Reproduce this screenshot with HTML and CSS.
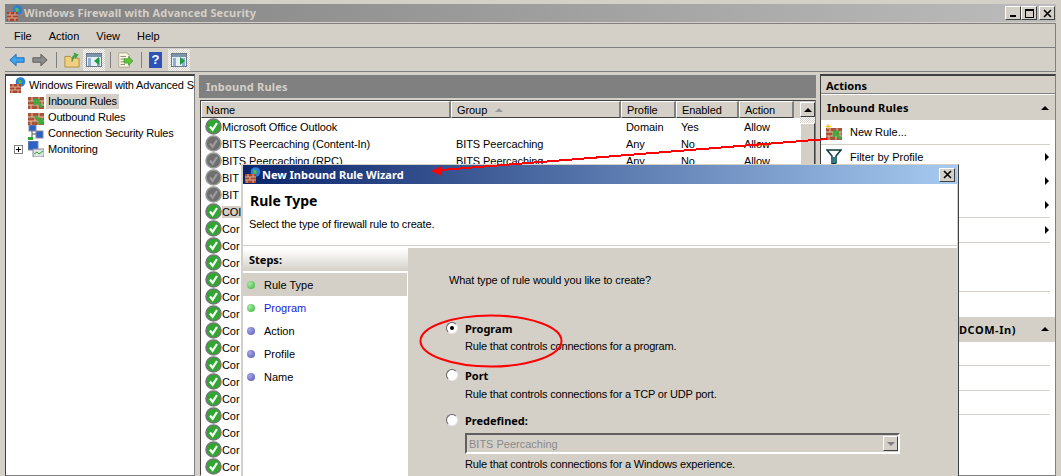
FILE: index.html
```html
<!DOCTYPE html>
<html lang="en">
<head>
<meta charset="utf-8">
<title>Windows Firewall with Advanced Security</title>
<link rel="stylesheet" href="styles.css">
</head>
<body>
<svg class="defs" width="0" height="0">
  <defs>
    <symbol id="ok" viewBox="0 0 17 17">
      <circle cx="8.5" cy="8.5" r="7.5" fill="#2fa82f" stroke="#777" stroke-width="1.6"/>
      <path d="M5 8.5l2.6 3.3L12 5" fill="none" stroke="#fff" stroke-width="2.2"/>
    </symbol>
    <symbol id="off" viewBox="0 0 17 17">
      <circle cx="8.5" cy="8.5" r="7.5" fill="#6f6f6f" stroke="#999" stroke-width="1.6"/>
      <path d="M5 8.5l2.6 3.3L12 5" fill="none" stroke="#9c9c9c" stroke-width="2.2"/>
    </symbol>
    <symbol id="brick" viewBox="0 0 16 16">
      <rect x="0" y="4" width="16" height="12" fill="#a9543a"/>
      <path d="M0 8h16M0 12h16M4 4v4M11 4v4M7 8v4M14 8v4M3 12v4M10 12v4" stroke="#e3c4a8" stroke-width="1" fill="none"/>
    </symbol>
    <symbol id="globewall" viewBox="0 0 16 16">
      <circle cx="10.5" cy="5" r="4.8" fill="#2a7fd6"/>
      <path d="M8 2.5l3 .5 1 3-3 1.5z" fill="#58b848"/>
      <rect x="0" y="7" width="11" height="9" fill="#a9432c"/>
      <path d="M0 10h11M0 13h11M3 7v3M8 7v3M5 10v3M2 13v3M8 13v3" stroke="#dcae96" stroke-width="1" fill="none"/>
    </symbol>
    <symbol id="dlg" viewBox="0 0 22 22">
      <rect x="3.500" y="4.500" width="15" height="13" fill="#e8eef5" stroke="#6b7a8a"/>
      <rect x="4" y="5" width="14" height="3" fill="#7d94ad"/>
      <rect x="5" y="9" width="3" height="8" fill="#8fb0cf"/>
      <rect x="14" y="9" width="3" height="8" fill="#8fb0cf"/>
    </symbol>
  </defs>
</svg>

<div class="window">
  <header class="titlebar">
    <svg class="ico16"><use href="#globewall"/></svg>
    <span class="title-text">Windows Firewall with Advanced Security</span>
    <div class="winbtns">
      <span class="winbtn"><i class="min"></i></span>
      <span class="winbtn"><i class="max"></i></span>
      <span class="winbtn close"><svg width="11" height="11" viewBox="0 0 11 11"><path d="M2 2l7 7M9 2l-7 7" stroke="#000" stroke-width="1.6"/></svg></span>
    </div>
  </header>

  <nav class="menubar">
    <span>File</span><span>Action</span><span>View</span><span>Help</span>
  </nav>

  <div class="toolbar">
    <svg class="tool back" viewBox="0 0 18 18"><path d="M1 9l7-6.500v4h9v5H8v4z" fill="#3fa4ea" stroke="#1766b8"/></svg>
    <svg class="tool fwd" viewBox="0 0 18 18"><path d="M17 9l-7-6.500v4H1v5h9v4z" fill="#8c8c8c" stroke="#555"/></svg>
    <span class="tsep first"></span>
    <svg class="tool folder" viewBox="0 0 18 18"><path d="M1 5h6l2 2h8v10H1z" fill="#f0d080" stroke="#a98d3a"/><path d="M9 11c-1-4 1-7 3-8l-1-2 5 2-3 4-1-2c-1 1-2 3-3 6z" fill="#3cae3c" stroke="#24802a" stroke-width=".5"/></svg>
    <span class="tbtn"><svg class="ico22"><use href="#dlg"/></svg><svg class="arrow-in" viewBox="0 0 6 8"><path d="M5 0v8L0 4z" fill="#1c9c40"/></svg></span>
    <span class="tsep"></span>
    <svg class="tool export" viewBox="0 0 18 18"><path d="M2 1h9l3 3v13H2z" fill="#fbf6e0" stroke="#a8a48c"/><path d="M4 5h6M4 8h5M4 11h5M4 14h5" stroke="#7b7b7b"/><path d="M8 7.500h5V5l5 5-5 5v-2.500H8z" fill="#5fc23a" stroke="#2f9021" stroke-width=".7"/></svg>
    <span class="tsep"></span>
    <span class="helpbtn">?</span>
    <span class="tbtn"><svg class="ico22"><use href="#dlg"/></svg><svg class="arrow-in" viewBox="0 0 6 8"><path d="M1 0v8l5-4z" fill="#1c9c40"/></svg></span>
  </div>

  <main class="panes">
    <aside class="tree">
      <div class="node root"><svg class="ico16"><use href="#globewall"/></svg><span>Windows Firewall with Advanced S</span></div>
      <div class="node"><svg class="ico16"><use href="#brick"/><path d="M14 14L7 7m0 5V7h5" stroke="#3cae3c" stroke-width="2.500" fill="none"/></svg><span class="sel">Inbound Rules</span></div>
      <div class="node"><svg class="ico16"><use href="#brick"/><path d="M7 7l7 7m0-5v5H9" stroke="#3cae3c" stroke-width="2.500" fill="none"/></svg><span>Outbound Rules</span></div>
      <div class="node"><svg class="ico16" viewBox="0 0 16 16"><rect x="1" y="0" width="7" height="6" fill="#2a62c8" stroke="#889"/><rect x="8" y="6" width="7" height="7" fill="#2a62c8" stroke="#889"/><rect x="0" y="12" width="5" height="3" fill="#2ea52e"/><path d="M4 6v6M8 9H4" stroke="#555"/></svg><span>Connection Security Rules</span></div>
      <div class="node"><b class="plus"></b><svg class="ico16" viewBox="0 0 16 16"><rect x="0" y="0" width="10" height="9" fill="#2a62c8" stroke="#889"/><rect x="5" y="8" width="11" height="8" fill="#dfe3e6" stroke="#889"/><path d="M6 13l3-2 2 2 4-3" stroke="#2ea52e" fill="none"/></svg><span>Monitoring</span></div>
    </aside>

    <section class="center">
      <h2 class="center-head">Inbound Rules</h2>
      <div class="list">
        <div class="list-body">
          <div class="row head">
            <span class="c name">Name</span>
            <span class="c group">Group <i class="sort"></i></span>
            <span class="c profile">Profile</span>
            <span class="c enabled">Enabled</span>
            <span class="c action">Action</span>
          </div>
          <div class="row"><svg class="ok"><use href="#ok"/></svg><span class="c name">Microsoft Office Outlook</span><span class="c group"></span><span class="c profile">Domain</span><span class="c enabled">Yes</span><span class="c action">Allow</span></div>
          <div class="row"><svg class="ok"><use href="#off"/></svg><span class="c name">BITS Peercaching (Content-In)</span><span class="c group">BITS Peercaching</span><span class="c profile">Any</span><span class="c enabled">No</span><span class="c action">Allow</span></div>
          <div class="row"><svg class="ok"><use href="#off"/></svg><span class="c name">BITS Peercaching (RPC)</span><span class="c group">BITS Peercaching</span><span class="c profile">Any</span><span class="c enabled">No</span><span class="c action">Allow</span></div>
          <div class="row"><svg class="ok"><use href="#off"/></svg><span class="c name">BIT</span></div>
          <div class="row"><svg class="ok"><use href="#off"/></svg><span class="c name">BIT</span></div>
          <div class="row"><svg class="ok"><use href="#ok"/></svg><span class="c name"><span class="sel">COI</span></span></div>
          <div class="row"><svg class="ok"><use href="#ok"/></svg><span class="c name">Cor</span></div>
          <div class="row"><svg class="ok"><use href="#ok"/></svg><span class="c name">Cor</span></div>
          <div class="row"><svg class="ok"><use href="#ok"/></svg><span class="c name">Cor</span></div>
          <div class="row"><svg class="ok"><use href="#ok"/></svg><span class="c name">Cor</span></div>
          <div class="row"><svg class="ok"><use href="#ok"/></svg><span class="c name">Cor</span></div>
          <div class="row"><svg class="ok"><use href="#ok"/></svg><span class="c name">Cor</span></div>
          <div class="row"><svg class="ok"><use href="#ok"/></svg><span class="c name">Cor</span></div>
          <div class="row"><svg class="ok"><use href="#ok"/></svg><span class="c name">Cor</span></div>
          <div class="row"><svg class="ok"><use href="#ok"/></svg><span class="c name">Cor</span></div>
          <div class="row"><svg class="ok"><use href="#ok"/></svg><span class="c name">Cor</span></div>
          <div class="row"><svg class="ok"><use href="#ok"/></svg><span class="c name">Cor</span></div>
          <div class="row"><svg class="ok"><use href="#ok"/></svg><span class="c name">Cor</span></div>
          <div class="row"><svg class="ok"><use href="#ok"/></svg><span class="c name">Cor</span></div>
          <div class="row"><svg class="ok"><use href="#ok"/></svg><span class="c name">Cor</span></div>
          <div class="row"><svg class="ok"><use href="#ok"/></svg><span class="c name">Cor</span></div>
        </div>
        <div class="scroll">
          <span class="sbtn"><i class="up"></i></span>
          <span class="track"></span>
          <span class="thumb"></span>
        </div>
      </div>
    </section>

    <aside class="actions">
      <h3 class="actions-head">Actions</h3>
      <h4 class="group-head">Inbound Rules <i class="up"></i></h4>
      <div class="act line"><svg class="ico16" viewBox="0 0 16 16"><use href="#brick"/><path d="M15 15L8 8m0 5V8h5" stroke="#3cae3c" stroke-width="2.500" fill="none"/><path d="M2 0v5M0 2.500h5" stroke="#f2c230" stroke-width="1.300"/></svg><span>New Rule...</span></div>
      <div class="act"><svg class="ico16" viewBox="0 0 16 16"><path d="M1 1h14l-5 6v7l-4 1V7z" fill="#fff" stroke="#0d3b40" stroke-width="1.500"/><path d="M7 8h2v6H7z" fill="#168c96"/></svg><span>Filter by Profile</span><i class="more"></i></div>
      <div class="act"><i class="more"></i></div>
      <div class="act line"><i class="more"></i></div>
      <div class="act line"><i class="more"></i></div>
      <div class="act"></div>
      <div class="act line"></div>
      <div class="act plain"></div>
      <h4 class="group-head second"><span class="clip-label">(DCOM-In)</span> <i class="up"></i></h4>
      <div class="act line"></div>
      <div class="act line"></div>
      <div class="act line"></div>
    </aside>
  </main>
</div>

<div class="dialog">
  <div class="dlg-title">
    <svg class="ico16"><use href="#globewall"/></svg>
    <span>New Inbound Rule Wizard</span>
    <span class="winbtn close"><svg width="11" height="11" viewBox="0 0 11 11"><path d="M2 2l7 7M9 2l-7 7" stroke="#000" stroke-width="1.6"/></svg></span>
  </div>
  <div class="dlg-head">
    <h1>Rule Type</h1>
    <p>Select the type of firewall rule to create.</p>
  </div>
  <div class="dlg-body">
    <div class="steps">
      <div class="steps-head">Steps:</div>
      <div class="step on"><i class="dot green"></i>Rule Type</div>
      <div class="step link"><i class="dot green"></i>Program</div>
      <div class="step"><i class="dot"></i>Action</div>
      <div class="step"><i class="dot"></i>Profile</div>
      <div class="step"><i class="dot"></i>Name</div>
    </div>
    <div class="form">
      <p class="question">What type of rule would you like to create?</p>
      <div class="opt prog"><i class="radio checked"></i><div><b>Program</b><p>Rule that controls connections for a program.</p></div></div>
      <div class="opt port"><i class="radio"></i><div><b>Port</b><p>Rule that controls connections for a TCP or UDP port.</p></div></div>
      <div class="opt pre"><i class="radio"></i><div class="pre-col"><b>Predefined:</b>
        <div class="combo"><span>BITS Peercaching</span><span class="combo-btn"><i></i></span></div>
        <p>Rule that controls connections for a Windows experience.</p></div></div>
    </div>
  </div>
</div>

<svg class="annot" width="1061" height="476" viewBox="0 0 1061 476">
  <path d="M827 139L441 170" fill="none" stroke="#f00" stroke-width="2" shape-rendering="crispEdges"/>
  <path d="M431 171l11-5v10z" fill="#f00"/>
  <ellipse cx="491" cy="341" rx="70.500" ry="25.500" fill="none" stroke="#f00" stroke-width="2"/>
</svg>
</body>
</html>
```
FILE: styles.css
```css
html, body {
  margin: 0;
  height: 476px;
  overflow: hidden;
}
body {
  position: relative;
  background: #d4d0c8;
  font: 11px "Liberation Sans", "Noto Sans", sans-serif;
  color: #000;
}
h1, h2, h3, h4, b { font-family: "Noto Sans", "Liberation Sans", sans-serif; }
h1, h2, h3, h4, p { margin: 0; }
i { display: block; }
svg { flex: none; display: block; }
.defs { position: absolute; }
.ico16 { width: 16px; height: 16px; }
.ico22 { width: 22px; height: 22px; }

.window {
  height: 476px;
  box-sizing: border-box;
  padding: 4px 5px 0 5px;
  display: flex;
  flex-direction: column;
}
.titlebar {
  height: 18px;
  display: flex;
  align-items: center;
  gap: 1px;
  padding-left: 2px;
  background: linear-gradient(90deg, #808080, #bcbcbc);
  color: #d4d0c8;
  font-family: "Noto Sans", "Liberation Sans", sans-serif;
  font-weight: 700;
  font-size: 11px;
  letter-spacing: .13px;
}
.title-text { margin-top: -1px; }
.winbtns { margin-left: auto; display: flex; margin-right: 1px; }
.winbtn {
  width: 16px;
  height: 14px;
  box-sizing: border-box;
  background: #d4d0c8;
  border: 1px solid;
  border-color: #fff #404040 #404040 #fff;
  display: flex;
  align-items: center;
  justify-content: center;
}
.winbtns .close { margin-left: 2px; }
.min { width: 6px; height: 2px; background: #000; margin-top: 6px; }
.max { width: 9px; height: 9px; box-sizing: border-box; border: 1px solid #000; border-top-width: 2px; }

.menubar {
  margin-top: 1px;
  height: 25px;
  display: flex;
  align-items: center;
  gap: 17px;
  padding-left: 9px;
  border: 1px solid #808080;
  border-width: 1px 1px 1px 0;
  box-sizing: border-box;
}
.toolbar {
  height: 24px;
  display: flex;
  align-items: center;
  padding-left: 4px;
  border-bottom: 1px solid #808080;
  border-right: 1px solid #808080;
  box-sizing: border-box;
}
.tool { width: 16px; height: 16px; margin-right: 8px; }
.tool.back { margin-right: 7px; }
.tool.folder { margin-right: 3px; }
.tsep { width: 1px; height: 16px; background: #808080; margin-right: 6px; }
.tsep.first { margin-right: 7px; }
.tool.export + .tsep { margin-right: 7px; }
.tbtn {
  width: 22px;
  height: 22px;
  position: relative;
  margin-right: 5px;
  background: repeating-conic-gradient(#d4d0c8 0 25%, #fff 0 50%) 0 0 / 2px 2px;
}
.arrow-in { position: absolute; left: 11px; top: 8px; width: 6px; height: 8px; }
.helpbtn {
  width: 13px;
  height: 16px;
  background: #2d53b8;
  color: #fff;
  font-weight: 700;
  font-size: 13px;
  line-height: 16px;
  text-align: center;
  margin-right: 6px;
}

.panes {
  flex: 1;
  min-height: 0;
  margin-top: 2px;
  display: flex;
}
.tree {
  width: 190px;
  box-sizing: border-box;
  flex: none;
  background: #fff;
  border: 1px solid #808080;
  border-top: 2px solid #404040;
  border-left: 1px solid #404040;
  padding-top: 1px;
  overflow: hidden;
  white-space: nowrap;
  letter-spacing: -.16px;
}
.node {
  height: 16px;
  display: flex;
  align-items: center;
  gap: 2px;
  padding-left: 22px;
}
.node.root { padding-left: 4px; gap: 1px; }
.node span { padding: 0 2px; line-height: 15px; }
.sel { background: #d4d0c8; }
.node .plus {
  width: 9px;
  height: 9px;
  box-sizing: border-box;
  flex: none;
  border: 1px solid #808080;
  margin: 0 3px 0 -14px;
  background: linear-gradient(#000, #000) center/5px 1px no-repeat, linear-gradient(#000, #000) center/1px 5px no-repeat, #fff;
}

.center {
  width: 617px;
  flex: none;
  margin-left: 4px;
  padding-top: 1px;
  display: flex;
  flex-direction: column;
  min-height: 0;
}
.center-head {
  height: 23px;
  flex: none;
  background: #808080;
  color: #d4d0c8;
  font-size: 11px;
  letter-spacing: .2px;
  line-height: 23px;
  padding-left: 7px;
}
.list {
  flex: 1;
  margin: 2px 0 0 1px;
  min-height: 0;
  border: 1px solid;
  border-color: #404040 #808080 #fff #404040;
  background: #fff;
  display: flex;
  overflow: hidden;
}
.list-body { flex: 1; min-width: 0; letter-spacing: -.08px; }
.row { display: flex; height: 17px; align-items: center; white-space: nowrap; }
.row .ok { width: 17px; height: 17px; margin-left: 4px; }
.c { display: block; box-sizing: border-box; overflow: hidden; flex: none; }
.row .name { width: 229px; }
.row .group { width: 170px; padding-left: 5px; }
.row .profile { width: 55px; padding-left: 5px; }
.row .enabled { width: 63px; padding-left: 5px; }
.row .action { width: 55px; padding-left: 5px; }
.row.head { background: #d4d0c8; }
.row.head .c {
  height: 17px;
  line-height: 15px;
  padding-top: 1px;
  border-right: 2px solid #808080;
  border-bottom: 1px solid #404040;
  border-left: 1px solid #fff;
  border-top: 1px solid #fff;
}
.row.head .name { width: 250px; padding-left: 4px; }
.sort {
  display: inline-block;
  width: 0;
  height: 0;
  margin: 0 0 2px 5px;
  border: 4px solid transparent;
  border-top: 0;
  border-bottom: 4px solid #9a9a9a;
}
.scroll {
  width: 20px;
  flex: none;
  display: flex;
  flex-direction: column;
  align-items: flex-end;
  background: linear-gradient(#d4d0c8 17px, #fff 17px);
}
.sbtn {
  width: 15px;
  height: 15px;
  box-sizing: border-box;
  flex: none;
  margin-top: 1px;
  background: #d4d0c8;
  border: 1px solid;
  border-color: #fff #404040 #404040 #fff;
  display: flex;
  align-items: center;
  justify-content: center;
}
.up {
  width: 0;
  height: 0;
  border: 4px solid transparent;
  border-top: 0;
  border-bottom: 4px solid #000;
}
.track {
  width: 15px;
  height: 6px;
  flex: none;
  background: repeating-conic-gradient(#d4d0c8 0 25%, #fff 0 50%) 0 0 / 2px 2px;
}
.thumb {
  width: 15px;
  flex: 1;
  box-sizing: border-box;
  background: #d4d0c8;
  border: 1px solid;
  border-color: #fff #404040 #404040 #fff;
}

.actions {
  flex: 1;
  min-width: 0;
  margin-left: 4px;
  box-sizing: border-box;
  background: #fff;
  border: 1px solid #808080;
  border-top: 2px solid #404040;
  border-left: 1px solid #404040;
  overflow: hidden;
  white-space: nowrap;
}
.actions-head {
  height: 17px;
  margin-bottom: 1px;
  background: #d4d0c8;
  font-size: 11px;
  line-height: 19px;
  padding-left: 5px;
  border-bottom: 1px solid #808080;
}
.group-head {
  height: 25px;
  box-sizing: border-box;
  background: #d4d0c8;
  font-size: 11px;
  letter-spacing: .2px;
  line-height: 25px;
  padding: 0 6px 0 6px;
  display: flex;
  align-items: center;
  justify-content: space-between;
}
.group-head.second { justify-content: flex-end; gap: 25px; }
.clip-label { letter-spacing: .55px; }
.act {
  height: 24.500px;
  box-sizing: border-box;
  display: flex;
  align-items: center;
  gap: 8px;
  margin-right: 5px;
  padding-left: 5px;
  position: relative;
}
.act.line { border-bottom: 1px solid #d4d0c8; }
.act.plain { height: 25px; }
.more {
  position: absolute;
  right: 1px;
  width: 0;
  height: 0;
  border: 4px solid transparent;
  border-right: 0;
  border-left: 4px solid #000;
}

.dialog {
  position: absolute;
  left: 241px;
  top: 164px;
  width: 718px;
  height: 320px;
  box-sizing: border-box;
  background: #d4d0c8;
  border: 1px solid;
  border-color: #d4d0c8 #404040 #404040 #d4d0c8;
  padding: 0 1px;
  overflow: hidden;
}
.dlg-title {
  height: 19px;
  display: flex;
  align-items: center;
  gap: 1px;
  padding-left: 2px;
  background: linear-gradient(90deg, #0a246a, #a6caf0);
  color: #fff;
  font-family: "Noto Sans", "Liberation Sans", sans-serif;
  font-weight: 700;
  font-size: 11px;
}
.dlg-title .winbtn { margin-left: auto; margin-right: 2px; }
.dlg-head {
  height: 62px;
  box-sizing: border-box;
  background: #fff;
  padding: 7px 0 0 7px;
  border-bottom: 1px solid #d4d0c8;
}
.dlg-head h1 { font-size: 14px; line-height: 20px; }
.dlg-head p { margin: 6px 0 0 -1px; line-height: 15px; letter-spacing: -.17px; }
.dlg-body { display: flex; height: 240px; border-top: 2px solid #fff; }
.steps { width: 166px; background: #fff; border-right: 1px solid #d4d0c8; flex: none; box-sizing: border-box; margin-right: 1px; }
.steps-head {
  height: 22px;
  margin-top: 1px;
  line-height: 21px;
  padding-left: 6px;
  font-family: "Noto Sans", "Liberation Sans", sans-serif;
  font-weight: 700;
  background: linear-gradient(#fff, #d4d0c8);
}
.step {
  height: 23px;
  display: flex;
  align-items: center;
  padding-left: 4px;
  margin-right: 1px;
}
.step.on { background: #d4d0c8; margin-top: 2px; }
.step.link { color: #1a1ae0; }
.dot {
  width: 8px;
  height: 8px;
  border-radius: 50%;
  margin-right: 9px;
  background: radial-gradient(circle at 35% 35%, #a6a6e6, #5656b8);
}
.dot.green { background: radial-gradient(circle at 35% 35%, #a6eca6, #38b038); }
.form { flex: 1; padding: 25px 0 0 39px; }
.question { line-height: 15px; letter-spacing: -.12px; }
.opt { display: flex; align-items: flex-start; }
.opt p { line-height: 15px; letter-spacing: -.18px; }
.opt b { display: block; line-height: 15px; }
.radio {
  width: 12px;
  height: 12px;
  flex: none;
  box-sizing: border-box;
  border-radius: 50%;
  background: #fff;
  border: 1.500px solid;
  border-color: #606060 #e8e8e8 #e8e8e8 #606060;
  margin: 1px 7px 0 -3px;
  position: relative;
}
.radio.checked::after {
  content: "";
  position: absolute;
  left: 2.500px;
  top: 2.500px;
  width: 4px;
  height: 4px;
  border-radius: 50%;
  background: #000;
}
.opt.prog { margin-top: 33px; }
.opt.prog p { margin-top: 3px; }
.opt.port { margin-top: 14px; }
.opt.port p { margin-top: 4px; }
.opt.pre { margin-top: 11px; }
.pre-col { flex: none; }
.combo {
  width: 435px;
  height: 21px;
  box-sizing: border-box;
  margin-top: 5px;
  border: 2px solid;
  border-color: #606060 #fff #fff #606060;
  display: flex;
  align-items: center;
  justify-content: space-between;
  color: #8a8a8a;
  padding-left: 2px;
}
.combo-btn {
  width: 15px;
  height: 15px;
  box-sizing: border-box;
  border: 1px solid;
  border-color: #fff #404040 #404040 #fff;
  display: flex;
  align-items: center;
  justify-content: center;
}
.combo-btn i {
  width: 0;
  height: 0;
  border: 4px solid transparent;
  border-bottom: 0;
  border-top: 4px solid #808080;
}
.pre-col p { margin-top: 3px; }

.annot { position: absolute; left: 0; top: 0; pointer-events: none; }
```
